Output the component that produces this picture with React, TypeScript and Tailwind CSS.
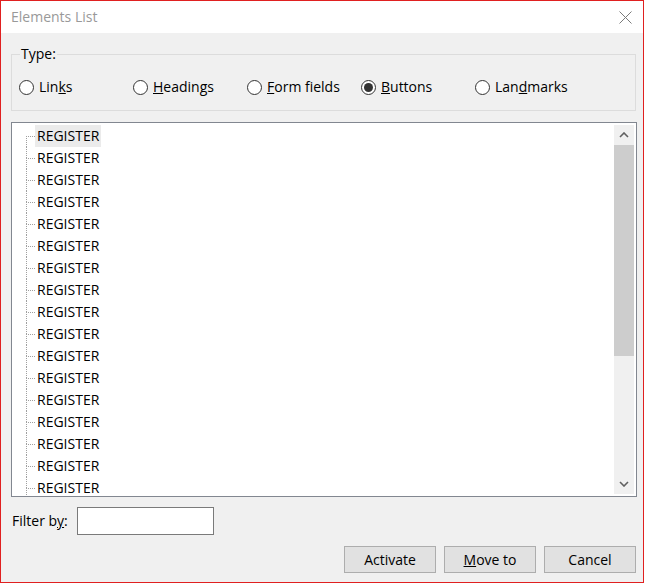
import React from "react";

const font = { fontFamily: '"Open Sans", "Noto Sans", sans-serif' };

function Radio({ label, checked }: { label: React.ReactNode; checked?: boolean }) {
  return (
    <div className="w-[114px] flex items-center h-[18px]">
      <span className="w-[15px] h-[15px] rounded-full border border-[#333333] bg-white flex items-center justify-center shrink-0">
        {checked && <span className="w-[9px] h-[9px] rounded-full bg-[#333333]" />}
      </span>
      <span className="ml-[5px] text-[14px] leading-[18px] text-black whitespace-nowrap">{label}</span>
    </div>
  );
}

function Row({ first }: { first?: boolean }) {
  return (
    <div className="h-[22px] flex items-stretch shrink-0">
      <div className="w-[9px] flex flex-col shrink-0">
        <div className={"h-[11px] " + (first ? "" : "border-l border-dotted border-[#a0a0a0]")} />
        <div className="flex-1 border-l border-t border-dotted border-[#a0a0a0]" />
      </div>
      <div className={"px-[2px] flex items-center text-[14px] leading-[22px] text-black " + (first ? "bg-[#ebebeb]" : "")}>
        REGISTER
      </div>
    </div>
  );
}

function Chevron({ up }: { up?: boolean }) {
  return (
    <svg width="10" height="6" viewBox="0 0 10 6">
      <path
        d={up ? "M1 5 L5 1 L9 5" : "M1 1 L5 5 L9 1"}
        fill="none"
        stroke="#606060"
        strokeWidth="1.6"
      />
    </svg>
  );
}

export default function App() {
  const rows = Array.from({ length: 17 });
  return (
    <div className="w-[646px] h-[583px] bg-white" style={font}>
      <div className="w-[644px] h-[583px] border border-[#e02020] flex flex-col">
        <div className="h-[32px] bg-white flex items-center justify-between pl-[10px] pr-[11px] shrink-0">
          <span className="text-[14px] text-[#999999] leading-[20px]">Elements List</span>
          <svg width="13" height="13" viewBox="0 0 13 13">
            <path d="M0.5 0.5 L12.5 12.5 M12.5 0.5 L0.5 12.5" stroke="#7a7a7a" strokeWidth="1" fill="none" />
          </svg>
        </div>
        <div className="flex-1 bg-[#f0f0f0] pl-[10px] pr-[6px] flex flex-col">
          <div className="relative mt-[21px] mr-[1px] h-[57px] border border-[#dcdcdc] pt-[23px] pl-[7px] flex shrink-0">
            <span className="absolute -top-[11px] left-[8px] px-[1px] bg-[#f0f0f0] text-[14px] leading-[20px] text-black">
              Type:
            </span>
            <Radio label={<>Lin<u>k</u>s</>} />
            <Radio label={<><u>H</u>eadings</>} />
            <Radio label={<><u>F</u>orm fields</>} />
            <Radio label={<><u>B</u>uttons</>} checked />
            <Radio label={<>Lan<u>d</u>marks</>} />
          </div>
          <div className="mt-[11px] h-[375px] border border-[#828790] bg-white flex shrink-0 overflow-hidden">
            <div className="flex-1 pt-[2px] pl-[14px] flex flex-col overflow-hidden">
              {rows.map((_, i) => (
                <Row key={i} first={i === 0} />
              ))}
            </div>
            <div className="w-[20px] my-[2px] mr-[2px] bg-[#f0f0f0] flex flex-col">
              <div className="h-[20px] flex items-center justify-center">
                <Chevron up />
              </div>
              <div className="h-[211px] bg-[#cdcdcd]" />
              <div className="flex-1" />
              <div className="h-[20px] flex items-center justify-center">
                <Chevron />
              </div>
            </div>
          </div>
          <div className="mt-[10px] h-[28px] flex items-center shrink-0">
            <span className="w-[66px] pl-[1px] text-[14px] text-black leading-[20px]">
              Filter b<u>y</u>:
            </span>
            <div className="w-[137px] h-[28px] border border-[#7a7a7a] bg-white" />
          </div>
          <div className="mt-[11px] mr-[1px] flex justify-end gap-[8px] shrink-0">
            {[<>Activate</>, <><u>M</u>ove to</>, <>Cancel</>].map((l, i) => (
              <div
                key={i}
                className="w-[92px] h-[27px] bg-[#e1e1e1] border border-[#adadad] flex items-center justify-center text-[14px] text-black leading-[20px]"
              >
                {l}
              </div>
            ))}
          </div>
        </div>
      </div>
    </div>
  );
}
